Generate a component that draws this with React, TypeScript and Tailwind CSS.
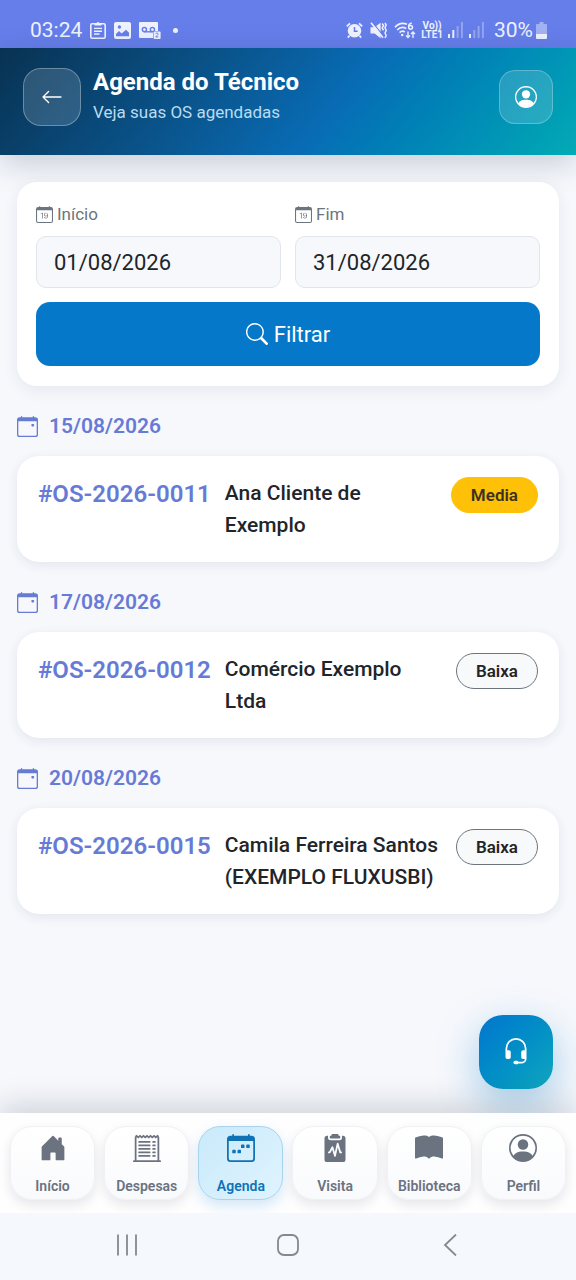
import {
  BsArrowLeft,
  BsBookFill,
  BsCalendarDate,
  BsCalendarEvent,
  BsCalendarWeek,
  BsClipboard2PulseFill,
  BsHeadset,
  BsHouseDoorFill,
  BsPersonCircle,
  BsReceiptCutoff,
  BsSearch,
} from "react-icons/bs"
import clsx from "clsx"

const orders = [
  { date: "15/08/2026", id: "#OS-2026-0011", client: "Ana Cliente de Exemplo", priority: "Media" },
  { date: "17/08/2026", id: "#OS-2026-0012", client: "Comércio Exemplo Ltda", priority: "Baixa" },
  { date: "20/08/2026", id: "#OS-2026-0015", client: "Camila Ferreira Santos (EXEMPLO FLUXUSBI)", priority: "Baixa" },
]

const tabs = [
  { label: "Início", icon: BsHouseDoorFill },
  { label: "Despesas", icon: BsReceiptCutoff },
  { label: "Agenda", icon: BsCalendarWeek, active: true },
  { label: "Visita", icon: BsClipboard2PulseFill },
  { label: "Biblioteca", icon: BsBookFill },
  { label: "Perfil", icon: BsPersonCircle },
]

function ClipboardIcon() {
  return (
    <svg width="16" height="18" viewBox="0 0 16 18" fill="none" stroke="currentColor" strokeWidth="1.6">
      <rect x="0.8" y="2.8" width="14.4" height="14.4" rx="1.4" />
      <path d="M4 7.4h8M4 10.2h8M4 13h5.5" strokeWidth="1.4" />
      <path d="M4.5 4.6V2.4h2a1.5 1.5 0 0 1 3 0h2v2.2z" fill="currentColor" stroke="none" />
    </svg>
  )
}

function PictureIcon() {
  return (
    <svg width="17" height="17" viewBox="0 0 17 17">
      <rect width="17" height="17" rx="2" fill="currentColor" />
      <circle cx="5.4" cy="5" r="1.7" fill="#667eea" />
      <path d="M2 14.2V12l3-3 2.6 2.4L12 7.8l3 3v3.4z" fill="#667eea" />
    </svg>
  )
}

function VoicemailIcon() {
  return (
    <svg width="22" height="17" viewBox="0 0 22 17">
      <path d="M1 0h17a1 1 0 0 1 1 1v8h-5v7H1a1 1 0 0 1-1-1V1a1 1 0 0 1 1-1z" fill="currentColor" />
      <g fill="none" stroke="#667eea" strokeWidth="1.4">
        <circle cx="5.4" cy="7.6" r="2.1" />
        <circle cx="13.4" cy="7.6" r="2.1" />
        <path d="M5.4 9.8h8" />
      </g>
      <rect x="14.6" y="9.4" width="7" height="7.6" rx="1" fill="currentColor" />
      <path d="M16.6 11.6c.6-.9 2.7-.7 2.5.6-.1.9-1.6 1.6-2.4 2.7h2.6" fill="none" stroke="#667eea" />
    </svg>
  )
}

function AlarmIcon() {
  return (
    <svg width="17" height="17" viewBox="0 0 17 17">
      <circle cx="8.5" cy="8.8" r="6.8" fill="currentColor" />
      <path d="M.8 4.4 4 1.4M16.2 4.4l-3.2-3M3.6 13.6l-1.8 2M13.4 13.6l1.800 2" stroke="currentColor" strokeWidth="1.8" />
      <path d="M8.5 5v4.2h3.2" fill="none" stroke="#667eea" strokeWidth="1.5" />
    </svg>
  )
}

function MuteIcon() {
  return (
    <svg width="17" height="17" viewBox="0 0 17 17">
      <path d="M.5 5.2h4L10.600.8v15.400l-6-4.600H.5z" fill="currentColor" />
      <path d="M2.600.4 13.400 14" stroke="#667eea" strokeWidth="1.2" />
      <path d="M1 .8l12 15" stroke="currentColor" strokeWidth="1.7" />
      <path
        d="m12.200 1.500 1.300 2.200-1.300 2.200 1.300 2.400M15 1l1.200 2L15 5.500l1.200 3L15 11l1.200 2.500L15 16"
        fill="none"
        stroke="currentColor"
        strokeWidth="1.5"
      />
    </svg>
  )
}

function WifiIcon() {
  return (
    <svg width="22" height="17" viewBox="0 0 22 17" fill="none" stroke="currentColor">
      <path d="M1 5.2C4.300 1.500 9 .6 13 2.200M3.200 8c2.400-2.600 6-3.200 9-1.600M5.600 10.600c1.400-1.500 3.600-1.700 5.200-.6" strokeWidth="1.7" />
      <circle cx="8.2" cy="13" r="1.3" fill="currentColor" stroke="none" />
      <path d="M17.800 1.200c-2.200 0-3.200 1.600-3.200 3.600" strokeWidth="1.5" />
      <circle cx="16.6" cy="5.3" r="1.9" strokeWidth="1.5" />
      <path d="M14 9.600v6M12 13.500l2 2 2-2M19 16v-6M17 12l2-2 2 2" strokeWidth="1.4" />
    </svg>
  )
}

function SignalIcon({ level }: { level: number }) {
  return (
    <svg width="16" height="16" viewBox="0 0 16 16" fill="currentColor">
      {[0, 1, 2, 3].map((bar) => (
        <rect
          key={bar}
          x={bar * 4.3}
          y={[12, 8, 4, 0][bar]}
          width="2"
          height={[4, 8, 12, 16][bar]}
          opacity={bar < level ? 1 : 0.35}
        />
      ))}
    </svg>
  )
}

function BatteryIcon() {
  return (
    <svg width="11" height="17" viewBox="0 0 11 17" fill="currentColor">
      <path d="M1 2h2.500V0h4v2H10a1 1 0 0 1 1 1v9H0V3a1 1 0 0 1 1-1z" opacity="0.45" />
      <path d="M0 12h11v4a1 1 0 0 1-1 1H1a1 1 0 0 1-1-1z" />
    </svg>
  )
}

function StatusBar() {
  return (
    <div className="flex h-12 items-end justify-between bg-[#667eea] pr-[29px] pb-[6px] pl-[30px] text-[#eef2ff]">
      <div className="flex items-center gap-2">
        <span className="text-[21px] leading-6">03:24</span>
        <ClipboardIcon />
        <PictureIcon />
        <VoicemailIcon />
        <span className="ml-1 size-[5px] rounded-full bg-current" />
      </div>
      <div className="flex items-center gap-[5px]">
        <AlarmIcon />
        <span className="mx-[2px]">
          <MuteIcon />
        </span>
        <WifiIcon />
        <div className="flex flex-col items-center text-[10px] leading-[9px] font-bold">
          <span>Vo))</span>
          <span>LTE1</span>
        </div>
        <SignalIcon level={2} />
        <SignalIcon level={1} />
        <div className="ml-1 flex items-center gap-[3px]">
          <span className="text-[21px] leading-6">30%</span>
          <BatteryIcon />
        </div>
      </div>
    </div>
  )
}

function Header() {
  return (
    <header className="flex items-center justify-between bg-linear-130 from-[#083252] via-[#086cb5] via-58% to-[#04aab5] px-[23px] py-5 shadow-[0_8px_30px_rgba(15,23,60,0.2)]">
      <div className="flex items-start gap-3">
        <button
          type="button"
          aria-label="Voltar"
          className="flex size-[58px] items-center justify-center rounded-[18px] border border-white/30 bg-white/15 text-white"
        >
          <BsArrowLeft size={22} />
        </button>
        <div className="h-[67px]">
          <h1 className="text-2xl leading-7 font-bold text-white">Agenda do Técnico</h1>
          <p className="mt-1 text-[17px] leading-6 text-[#b9dcf0]">Veja suas OS agendadas</p>
        </div>
      </div>
      <button
        type="button"
        aria-label="Perfil"
        className="mb-[10px] flex size-[54px] items-center justify-center rounded-2xl border border-white/25 bg-white/15 text-white"
      >
        <BsPersonCircle size={22} />
      </button>
    </header>
  )
}

function DateField({ id, label, value }: { id: string; label: string; value: string }) {
  return (
    <div className="min-w-0">
      <label htmlFor={id} className="flex items-center gap-1 text-[17px] leading-6 text-[#6c757d]">
        <BsCalendarDate size={17} />
        {label}
      </label>
      <input
        id={id}
        type="text"
        defaultValue={value}
        className="mt-[10px] h-[52px] w-full rounded-[10px] border border-[#e1e5ec] bg-[#f6f8fc] px-[17px] text-[22px] text-[#212529]"
      />
    </div>
  )
}

function Filters() {
  return (
    <form className="rounded-[20px] bg-white px-[19px] py-5 shadow-[0_4px_16px_rgba(30,40,80,0.08)]">
      <div className="grid grid-cols-2 gap-[14px]">
        <DateField id="inicio" label="Início" value="01/08/2026" />
        <DateField id="fim" label="Fim" value="31/08/2026" />
      </div>
      <button
        type="button"
        className="mt-[14px] flex h-16 w-full items-center justify-center gap-[6px] rounded-[14px] bg-[#0678c9] text-[22px] text-white"
      >
        <BsSearch size={22} />
        Filtrar
      </button>
    </form>
  )
}

function OrderDay({ date, id, client, priority }: (typeof orders)[number]) {
  return (
    <section>
      <h2 className="mt-6 mb-[14px] flex items-center gap-[11px] text-[21px] leading-8 font-semibold text-[#667bd6]">
        <BsCalendarEvent size={21} />
        {date}
      </h2>
      <article className="flex items-start gap-[14px] rounded-[22px] bg-white p-[21px] shadow-[0_3px_12px_rgba(30,40,80,0.09)]">
        <span className="shrink-0 text-2xl leading-[34px] font-semibold text-[#667bd6]">{id}</span>
        <p className="min-w-0 flex-1 text-[21px] leading-8 font-medium text-[#212529]">{client}</p>
        <span
          className={clsx(
            "shrink-0 rounded-full border px-[19px] py-[5px] text-[17px] leading-6 font-semibold",
            priority === "Media"
              ? "border-[#ffc107] bg-[#ffc107] text-[#3b3222]"
              : "border-[#6c757d] bg-[#f8f9fa] text-[#212529]",
          )}
        >
          {priority}
        </span>
      </article>
    </section>
  )
}

function TabBar() {
  return (
    <nav className="relative grid grid-cols-6 gap-[9px] bg-white/90 px-[10px] py-[13px] shadow-[0_-8px_28px_rgba(15,23,42,0.16)]">
      {tabs.map(({ label, icon: Icon, active }) => (
        <a
          key={label}
          href="#"
          className={clsx(
            "flex h-[74px] flex-col items-center justify-between rounded-[22px] border pt-[7px] pb-1 text-sm leading-[18px] font-semibold",
            active
              ? "border-[#a9d3ec] bg-linear-135 from-[#c9eafa] to-[#e0f3ff] text-[#0f72b5] shadow-[0_6px_14px_rgba(6,120,201,0.18)]"
              : "border-[#f0f1f4] bg-linear-to-b from-white to-[#f9fafc] text-[#6b7280] shadow-[0_5px_12px_rgba(15,23,42,0.1)]",
          )}
        >
          <Icon size={28} />
          {label}
        </a>
      ))}
    </nav>
  )
}

function SystemBar() {
  return (
    <div className="relative flex h-[67px] items-center justify-center gap-[139px] bg-[#f5f8fd] pb-[3px] text-[#85888e]">
      <svg width="22" height="22" viewBox="0 0 22 22" stroke="currentColor" strokeWidth="1.8">
        <path d="M2 .5v21M11 .5v21M20 .5v21" />
      </svg>
      <svg width="22" height="22" viewBox="0 0 22 22" fill="none" stroke="currentColor" strokeWidth="1.8">
        <rect x="1" y="1" width="20" height="20" rx="6" />
      </svg>
      <svg width="22" height="22" viewBox="0 0 22 22" fill="none" stroke="currentColor" strokeWidth="1.8">
        <path d="M18 .5 7 11l11 10.500" />
      </svg>
    </div>
  )
}

export default function App() {
  return (
    <div className="flex min-h-screen flex-col bg-[#f6f8fc] font-['Roboto',sans-serif]">
      <StatusBar />
      <Header />
      <main className="flex-1 px-[17px] pt-[27px] pb-28">
        <Filters />
        {orders.map((order) => (
          <OrderDay key={order.id} {...order} />
        ))}
      </main>
      <div className="sticky bottom-0">
        <button
          type="button"
          aria-label="Suporte"
          className="absolute -top-[98px] right-[23px] flex size-[74px] items-center justify-center rounded-[24px] bg-linear-135 from-[#0675ce] to-[#12a6bd] text-white shadow-[0_14px_40px_rgba(6,120,201,0.35)]"
        >
          <BsHeadset size={28} />
        </button>
        <TabBar />
        <SystemBar />
      </div>
    </div>
  )
}
